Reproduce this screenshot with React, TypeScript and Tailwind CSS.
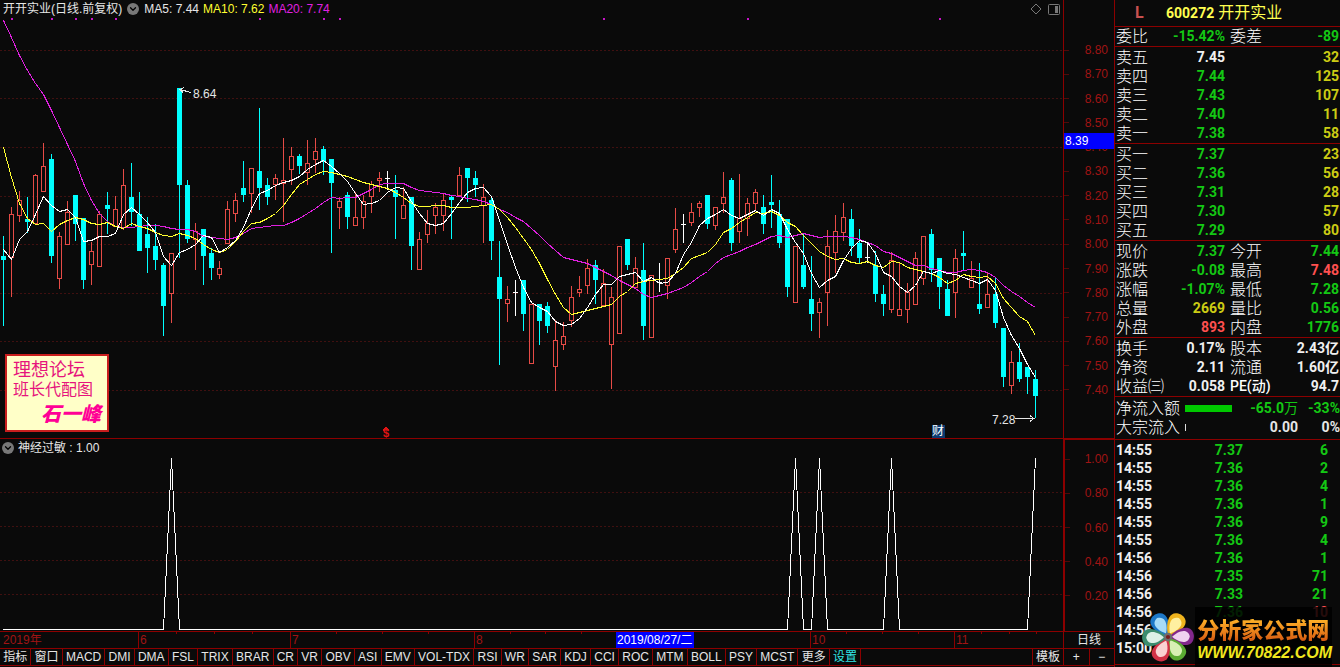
import type { ReactNode } from 'react';
import { ChevronDown } from 'lucide-react';

type Candle = [kind: 'up' | 'down' | 'flat', high: number, top: number, bottom: number, low: number];

const kinds = { r: 'up', c: 'down', w: 'flat' } as const;

// kind high top bottom low
const candles: Candle[] = `
c 236 256 260 326|r 207 214 257 297|r 191 200 215 222|c 197 219 222 233|r 174 175 223 223|r 143 166 191 191|c 154 159 256 263
r 232 236 278 289|r 201 212 244 244|c 195 195 224 241|c 218 218 280 289|r 242 251 264 285|r 211 214 266 266|c 192 205 209 234
r 196 209 226 226|r 169 185 227 230|c 163 197 212 226|c 192 214 251 251|c 217 234 248 273|c 224 246 260 270|c 263 265 306 336
r 253 253 293 323|c 88 88 185 258|c 180 185 239 243|r 223 231 239 270|c 229 229 256 285|c 248 253 268 280|r 261 268 274 279
r 201 209 243 243|r 193 200 213 222|c 161 188 195 202|r 168 168 193 213|c 108 171 188 210|c 178 185 197 205|r 174 178 184 200
r 138 180 183 222|r 147 156 169 185|c 154 156 166 174|r 140 163 172 185|r 138 151 159 173|c 146 149 161 175|c 159 159 183 253
r 197 201 207 229|c 192 195 217 229|r 192 217 225 225|r 195 201 217 229|r 181 184 196 213|r 172 178 180 192|w 171 178 178 190
c 175 190 197 239|r 187 205 218 218|c 197 197 246 270|r 232 239 269 269|r 210 223 234 243|r 203 207 215 234|r 193 200 215 231
c 195 197 200 239|r 167 175 195 195|c 168 168 178 202|c 171 178 185 197|r 184 197 205 243|c 198 200 241 260|c 241 277 299 365
r 286 299 303 322|w 280 292 292 316|c 280 280 314 331|r 304 304 363 363|c 304 304 321 345|c 302 306 326 333|r 320 340 366 391
r 322 336 344 350|r 286 297 320 327|r 276 289 292 297|r 259 268 285 294|c 260 265 280 304|r 269 283 305 305|r 287 297 344 389
r 246 246 333 333|c 239 239 265 270|r 257 268 287 287|c 243 270 326 340|r 275 275 337 338|w 263 282 282 292|r 258 258 285 299
r 208 229 249 253|w 214 224 224 243|r 203 212 222 226|r 201 203 207 217|c 195 195 224 229|r 207 207 225 230|r 172 197 203 213
c 178 180 243 251|r 174 218 231 243|r 198 203 218 236|r 189 192 203 211|c 195 207 224 234|c 175 202 205 228|c 200 214 243 248
c 219 219 287 297|r 246 246 302 302|c 234 265 287 289|c 256 299 314 331|r 298 302 312 338|r 230 246 292 326|r 215 231 252 273
r 203 217 232 241|c 209 219 246 256|c 229 243 258 264|w 242 257 257 263|c 251 265 294 302|c 285 294 304 316|r 252 260 309 313
r 262 309 315 315|r 283 292 309 323|r 252 258 304 304|r 236 236 278 285|c 229 234 270 282|c 258 258 287 309|c 280 289 316 316
r 249 258 292 318|c 231 253 256 270|r 261 278 287 287|c 263 304 309 314|r 273 294 307 307|c 277 294 323 328|c 328 328 377 387
r 351 362 385 394|c 343 362 379 382|c 367 367 377 394|c 370 379 396 418`
  .trim()
  .split(/[|\n]/)
  .map((row) => {
    const [k, ...v] = row.trim().split(' ');
    return [kinds[k as 'r' | 'c' | 'w'], ...v.map(Number)] as Candle;
  });

const ma5 = [
  249, 259, 239, 231, 214, 196, 205, 211, 209, 217, 241, 240, 236, 236, 233, 214, 207, 214, 222, 232, 256, 265, 252, 249, 244, 235,
  237, 252, 247, 240, 227, 208, 193, 190, 185, 182, 180, 176, 169, 164, 160, 166, 173, 181, 193, 204, 203, 200, 192, 187, 188, 201,
  213, 223, 225, 223, 213, 202, 192, 188, 187, 196, 220, 244, 267, 287, 302, 307, 311, 321, 325, 324, 318, 307, 294, 284, 284, 276,
  274, 272, 281, 277, 283, 282, 273, 254, 242, 225, 218, 214, 209, 215, 218, 214, 210, 215, 209, 213, 229, 242, 253, 273, 287, 280,
  276, 260, 248, 240, 242, 253, 272, 276, 286, 292, 285, 271, 273, 270, 273, 274, 277, 280, 283, 279, 290, 317, 335, 348, 364, 377,
];

const ma10 = [
  147, 177, 203, 218, 224, 223, 231, 224, 220, 217, 219, 223, 224, 222, 226, 228, 223, 226, 228, 232, 235, 236, 233, 235, 238, 244,
  249, 252, 249, 241, 231, 223, 222, 218, 213, 205, 194, 184, 179, 174, 171, 172, 174, 176, 179, 182, 184, 186, 188, 192, 197, 203,
  206, 206, 205, 205, 207, 207, 207, 206, 205, 204, 209, 217, 227, 238, 249, 263, 279, 294, 307, 314, 312, 310, 308, 306, 304, 296,
  291, 283, 281, 280, 279, 278, 273, 267, 258, 255, 252, 244, 232, 228, 222, 217, 212, 213, 211, 215, 222, 226, 235, 243, 251, 256,
  259, 258, 262, 263, 261, 265, 267, 261, 262, 267, 269, 271, 273, 277, 283, 280, 274, 276, 277, 276, 283, 298, 307, 316, 321, 335,
];

const ma20 = [
  20, 37, 55, 70, 83, 94, 110, 127, 144, 161, 183, 200, 213, 221, 226, 227, 227, 226, 225, 225, 226, 228, 229, 229, 231, 236, 237,
  238, 239, 237, 233, 228, 227, 226, 225, 225, 222, 218, 213, 208, 202, 197, 198, 197, 197, 193, 189, 184, 183, 183, 183, 187, 190,
  191, 192, 193, 195, 196, 198, 199, 201, 204, 209, 212, 217, 221, 228, 235, 243, 250, 257, 259, 261, 263, 267, 271, 275, 280, 284,
  288, 294, 297, 295, 293, 290, 287, 282, 276, 271, 263, 257, 254, 251, 247, 244, 240, 236, 235, 237, 235, 233, 235, 237, 236, 236,
  236, 237, 239, 242, 245, 251, 253, 257, 261, 265, 265, 268, 270, 272, 272, 270, 269, 270, 272, 277, 285, 291, 296, 302, 307,
];

const priceTicks = ['8.80', '8.70', '8.60', '8.50', '8.40', '8.30', '8.20', '8.10', '8.00', '7.90', '7.80', '7.70', '7.60', '7.50', '7.40'];
const signalTicks = ['1.00', '0.80', '0.60', '0.40', '0.20'];
const signals = [11, 51, 75, 91, 115, 259, 323, 339, 603, 747, 939];

const tabs = [
  '指标', '窗口', 'MACD', 'DMI', 'DMA', 'FSL', 'TRIX', 'BRAR', 'CR', 'VR', 'OBV', 'ASI', 'EMV', 'VOL-TDX', 'RSI', 'WR',
  'SAR', 'KDJ', 'CCI', 'ROC', 'MTM', 'BOLL', 'PSY', 'MCST', '更多', '设置',
];

const asks = [
  ['卖五', '7.45', '32'],
  ['卖四', '7.44', '125'],
  ['卖三', '7.43', '107'],
  ['卖二', '7.40', '11'],
  ['卖一', '7.38', '58'],
];

const bids = [
  ['买一', '7.37', '23'],
  ['买二', '7.36', '56'],
  ['买三', '7.31', '28'],
  ['买四', '7.30', '57'],
  ['买五', '7.29', '80'],
];

const green = 'text-[#14c814]';
const red = 'text-[#ff5050]';
const yellow = 'text-[#cccc14]';
const white = 'text-[#f0f0f0]';

const quotes = [
  ['现价', '7.37', green, '今开', '7.44', green],
  ['涨跌', '-0.08', green, '最高', '7.48', red],
  ['涨幅', '-1.07%', green, '最低', '7.28', green],
  ['总量', '2669', yellow, '量比', '0.56', green],
  ['外盘', '893', red, '内盘', '1776', green],
];

const finance = [
  ['换手', '0.17%', white, '股本', '2.43亿', white],
  ['净资', '2.11', white, '流通', '1.60亿', white],
  ['收益㈢', '0.058', white, 'PE(动)', '94.7', white],
];

const trades = [
  ['14:55', '7.37', '6'],
  ['14:55', '7.36', '2'],
  ['14:55', '7.36', '4'],
  ['14:55', '7.36', '1'],
  ['14:55', '7.36', '9'],
  ['14:55', '7.36', '4'],
  ['14:56', '7.36', '1'],
  ['14:56', '7.35', '71'],
  ['14:56', '7.33', '21'],
  ['14:56', '7.36', '10'],
  ['14:56', '', ''],
  ['15:00', '', ''],
];

const toPoints = (ys: number[]) => ys.map((y, i) => `${3.5 + i * 8},${y + 0.5}`).join(' ');

function CandleMark({ candle, index }: { candle: Candle; index: number }) {
  const [kind, high, top, bottom, low] = candle;
  const x = 3 + index * 8;
  if (kind === 'up') {
    return (
      <g stroke="#e64b46" fill="none">
        <path d={`M${x + 0.5} ${high}V${top}M${x + 0.5} ${bottom}V${low}`} />
        <rect x={x - 1.5} y={top + 0.5} width={4} height={bottom - top} />
      </g>
    );
  }
  if (kind === 'flat') {
    return <path stroke="#fff" d={`M${x + 0.5} ${high}V${low}M${x - 2} ${top + 0.5}h5`} />;
  }
  return (
    <g fill="#00ffff">
      <rect x={x} y={high} width={1} height={low - high} />
      <rect x={x - 2} y={top} width={5} height={bottom - top} />
    </g>
  );
}

function PriceChart() {
  return (
    <svg viewBox="0 18 1063 420" className="block w-full h-auto" shapeRendering="crispEdges">
      {[50, 98, 147, 196, 244, 293, 341, 390].map((y) => (
        <path key={y} d={`M0 ${y}.5H1063`} stroke="#401010" strokeDasharray="2 2" />
      ))}
      {signals.map((x) => (
        <rect key={x} x={x} y={18} width={2} height={2} fill="#c814c8" />
      ))}
      {candles.map((c, i) => (
        <CandleMark key={i} candle={c} index={i} />
      ))}
      <g fill="none">
        <polyline points={toPoints(ma20)} stroke="#e020e0" />
        <polyline points={toPoints(ma10)} stroke="#ffff30" />
        <polyline points={toPoints(ma5)} stroke="#fff" />
      </g>
      <g fill="none" stroke="#e6e6e6">
        <path d="M191 92.500L180 89.500M184 87.500L180 89.500L183 92.500" />
        <path d="M1015 418.500H1034M1030 415.500L1034 418.500L1030 421.500" />
      </g>
      <g className="text-xs" fill="#e6e6e6">
        <text x="193" y="98">8.64</text>
        <text x="992" y="424">7.28</text>
      </g>
      <path d="M383 430.500L386 427.500L389 430.500" stroke="#e01414" fill="none" />
      <text x="383" y="437" className="text-[11px] font-bold" fill="#e01414">$</text>
      <rect x="932" y="425" width="13" height="13" fill="#0c3a70" />
      <text x="932" y="435" className="text-xs" fill="#fff">财</text>
    </svg>
  );
}

function SignalChart() {
  return (
    <svg viewBox="0 456 1063 175" className="block w-full h-auto" shapeRendering="crispEdges">
      {[492, 526, 560, 594].map((y) => (
        <path key={y} d={`M0 ${y}.5H1063`} stroke="#401010" strokeDasharray="2 2" />
      ))}
      <polyline
        fill="none"
        stroke="#fff"
        points="3,629.5 163.5,629.5 171.5,458 179.5,629.5 787.5,629.5 795.5,458 803.5,629.5 811.5,629.5 819.5,458 827.5,629.5 883.5,629.5 891.5,458 899.5,629.5 1027.5,629.5 1035.5,458"
      />
    </svg>
  );
}

function Toggle({ label }: { label: string }) {
  return (
    <button aria-label={label} className="mx-px flex h-3 w-3 items-center justify-center rounded-full bg-[#787878]">
      <ChevronDown className="h-[10px] w-[10px] text-black" strokeWidth={3} />
    </button>
  );
}

function AxisLabel({ text }: { text: string }) {
  return (
    <div className="flex flex-1 items-center justify-between pr-[6px] text-[#a01414]">
      <span className="h-px w-[5px] bg-[#500a0a]"></span>
      {text}
    </div>
  );
}

function Month({ label }: { label: string }) {
  return (
    <div className="relative border-l border-[#8c0000] pl-px leading-4">
      <div className="absolute inset-x-0 top-0 flex h-[2px]">
        {[0, 1, 2, 3].map((n) => (
          <span key={n} className="flex-1 border-r border-[#8c0000] last:border-0"></span>
        ))}
      </div>
      {label}
    </div>
  );
}

function Block({ children }: { children: ReactNode }) {
  return <div className="border-b border-[#8c0000] pt-px">{children}</div>;
}

function BookTable({ rows, lead }: { rows: string[][]; lead: string }) {
  return (
    <table className="w-full table-fixed">
      <tbody>
        {rows.map(([label, price, qty], i) => (
          <tr key={label} className="h-[19px]">
            <th className="w-[50px] p-0 pl-px text-left text-base font-light leading-[19px] text-white">{label}</th>
            <td className={`w-[61px] p-0 pr-px text-right leading-[19px] ${i === 0 ? lead : green}`}>{price}</td>
            <td className={`p-0 pr-px text-right leading-[19px] ${yellow}`}>{qty}</td>
          </tr>
        ))}
      </tbody>
    </table>
  );
}

function QuoteTable({ rows }: { rows: string[][] }) {
  return (
    <table className="w-full table-fixed">
      <tbody>
        {rows.map(([a, av, ac, b, bv, bc]) => (
          <tr key={a} className="h-[19px] whitespace-nowrap leading-[19px]">
            <th className="w-[50px] p-0 pl-px text-left text-base font-light leading-[19px] text-white">{a}</th>
            <td className={`w-[61px] p-0 pr-px text-right ${ac}`}>{av}</td>
            <th className={`w-[50px] p-0 pl-1 text-left leading-[19px] text-white ${b.startsWith('PE') ? 'text-sm font-medium' : 'text-base font-light'}`}>{b}</th>
            <td className={`p-0 pr-px text-right ${bc}`}>{bv}</td>
          </tr>
        ))}
      </tbody>
    </table>
  );
}

const petals = [
  { angle: -30, outer: '#1e78c8', inner: '#a8dcf8' },
  { angle: 30, outer: '#f0b41e', inner: '#fff0a0' },
  { angle: 88, outer: '#82288c', inner: '#f0d2f0' },
  { angle: 148, outer: '#5aaa32', inner: '#d8f0b4' },
  { angle: 205, outer: '#d23246', inner: '#fad2d2' },
  { angle: 268, outer: '#3c8c6e', inner: '#dcf0e6' },
];

function SiteMark() {
  return (
    <a href="#" className="absolute bottom-0 right-2 flex items-center whitespace-nowrap">
      <svg viewBox="-26 -26 52 52" className="h-[54px] w-[54px]">
        {petals.map((p) => (
          <g key={p.angle} transform={`rotate(${p.angle})`}>
            <path d="M0 -1C-8 -8 -14 -24 0 -25C14 -24 8 -8 0 -1Z" fill={p.outer} />
            <path d="M0 -4C-5 -9 -9 -19 0 -21C9 -19 5 -9 0 -4Z" fill={p.inner} />
          </g>
        ))}
        <circle r="4" fill="#6e6e6e" />
        <circle r="2" fill="#7a1e1e" />
      </svg>
      <span className="flex h-[60px] flex-col justify-end bg-black/85 pb-1 pl-[2px]">
        <span className="bg-gradient-to-b from-[#ffb428] to-[#d2500f] bg-clip-text text-[22px] font-black leading-6 text-transparent">分析家公式网</span>
        <span className="text-base font-bold italic leading-5 text-[#f0e61e] [font-family:'Liberation_Sans',sans-serif]">WWW.70822.COM</span>
      </span>
    </a>
  );
}

export default function App() {
  return (
    <div className="flex min-h-screen bg-[#0a0a0a] text-xs text-[#e6e6e6] [font-family:'Liberation_Sans','Noto_Sans_CJK_SC',sans-serif]">
      <main className="flex min-w-0 flex-1 flex-col">
        {/* K line */}
        <section className="flex border-b border-[#8c0000]">
          <div className="relative min-w-0 flex-1">
            <header className="flex h-[18px] items-center gap-1 pl-[3px]">
              <h1>开开实业(日线.前复权)</h1>
              <Toggle label="日线" />
              <span>MA5: 7.44</span>
              <span className="text-[#ffff30]">MA10: 7.62</span>
              <span className="text-[#e020e0]">MA20: 7.74</span>
              <svg viewBox="0 0 32 12" className="ml-auto mr-px h-3 w-8" fill="none" stroke="#787878">
                <path d="M6 1L11 6L6 11L1 6Z" />
                <rect x="18.500" y="1.500" width="11" height="10" rx="1" />
                <rect x="25" y="3" width="3" height="7" fill="#787878" stroke="none" />
              </svg>
            </header>
            <PriceChart />
            <div className="absolute bottom-[6px] left-[5px] flex h-[78px] w-[104px] flex-col border-2 border-[#c81e1e] bg-[#ffffc8] px-[6px] pt-1 text-[#e6147d]">
              <span className="text-lg leading-5">理想论坛</span>
              <span className="text-base leading-5">班长代配图</span>
              <span className="text-right text-xl font-black italic leading-7 text-[#ff0096]">石一峰</span>
            </div>
          </div>
          <div className="relative w-[51px] border-l border-[#8c0000]">
            <div className="flex h-[402px] flex-col pt-[38px]">
              {priceTicks.map((t) => (
                <AxisLabel key={t} text={t} />
              ))}
            </div>
            <div className="absolute inset-x-0 top-[133px] h-4 bg-[#0000ff] pl-px leading-4 text-white">8.39</div>
          </div>
        </section>

        {/* Indicator */}
        <section className="flex border-b border-[#8c0000]">
          <div className="min-w-0 flex-1">
            <header className="flex h-[17px] items-center gap-[3px] pl-px">
              <Toggle label="神经过敏" />
              <h2>神经过敏 : 1.00</h2>
            </header>
            <SignalChart />
          </div>
          <div className="flex w-[51px] flex-col border-l-2 border-t border-[#8c0000] pb-[18px] pt-[2px]">
            {signalTicks.map((t) => (
              <AxisLabel key={t} text={t} />
            ))}
          </div>
        </section>

        <div className="flex h-[17px] border-b border-[#8c0000]">
          <div className="grid min-w-0 flex-1 grid-cols-[138fr_152fr_184fr_142fr_78px_116fr_144fr_109fr] text-[#a01414]">
            <div className="pl-[3px] leading-4">2019年</div>
            <Month label="6" />
            <Month label="7" />
            <Month label="8" />
            <div className="whitespace-nowrap bg-[#0000ff] pl-px leading-4 text-white">2019/08/27/二</div>
            <div></div>
            <Month label="10" />
            <Month label="11" />
          </div>
          <button className="w-[51px] border-l border-[#8c0000] leading-4">日线</button>
        </div>

        <div className="flex h-[17px] border-b border-[#8c0000]">
          <div className="flex min-w-0 flex-1 justify-between">
            <nav className="flex w-[81%]">
              {tabs.map((t) => (
                <button key={t} className={`flex-auto whitespace-nowrap border-r border-[#8c0000] px-[3px] leading-4 ${t === '设置' ? 'text-[#32e6e6]' : ''}`}>
                  {t}
                </button>
              ))}
            </nav>
            <button className="whitespace-nowrap border-l border-[#8c0000] px-[3px] leading-4">模板</button>
          </div>
          <div className="flex w-[51px] border-l border-[#8c0000]">
            <button className="flex-1 border-r border-[#8c0000] leading-4">+</button>
            <button className="flex-1 leading-4">−</button>
          </div>
        </div>
      </main>

      <aside className="relative w-[226px] shrink-0 border-l border-[#8c0000] text-sm font-bold [font-family:Roboto,'Noto_Sans_CJK_SC',sans-serif]">
        <header className="flex h-[26px] items-center pl-5">
          <span className="w-[31px] text-base text-[#c85050]">L</span>
          <span className="text-[#ffff50]">600272</span>
          <span className="pl-1 text-base font-normal text-[#ffff50]">开开实业</span>
        </header>
        <div className="border-y border-[#8c0000]">
          <QuoteTable rows={[['委比', '-15.42%', green, '委差', '-89', green]]} />
        </div>
        <Block>
          <BookTable rows={asks} lead={white} />
        </Block>
        <Block>
          <BookTable rows={bids} lead={green} />
        </Block>
        <Block>
          <QuoteTable rows={quotes} />
        </Block>
        <Block>
          <QuoteTable rows={finance} />
        </Block>
        <div className="border-b border-[#8c0000] py-[2px] text-right leading-[19px]">
          <div className="flex items-center whitespace-nowrap">
            <span className="w-[70px] pl-px text-left text-base font-light leading-[19px] text-white">净流入额</span>
            <span className="h-[7px] w-[47px] bg-[#00c800]"></span>
            <span className={`flex-1 ${green}`}>-65.0<span className="font-normal">万</span></span>
            <span className={`w-[42px] ${green}`}>-33%</span>
          </div>
          <div className="flex items-center whitespace-nowrap">
            <span className="w-[70px] pl-px text-left text-base font-light leading-[19px] text-white">大宗流入</span>
            <span className="h-[7px] w-px bg-[#dcdcdc]"></span>
            <span className="flex-1">0.00</span>
            <span className="w-[42px]">0%</span>
          </div>
        </div>
        <div className="border-b border-[#8c0000] pb-[7px] pt-px">
          <table className="w-full table-fixed">
            <tbody>
              {trades.map(([time, price, qty], i) => (
                <tr key={i} className="h-[18px] leading-[18px]">
                  <td className={`w-[50px] p-0 pl-px ${white}`}>{time}</td>
                  <td className={`w-[79px] p-0 pr-px text-right ${green}`}>{price}</td>
                  <td className={`p-0 pr-3 text-right ${qty === '10' ? red : green}`}>{qty}</td>
                </tr>
              ))}
            </tbody>
          </table>
        </div>
        <SiteMark />
      </aside>
    </div>
  );
}
